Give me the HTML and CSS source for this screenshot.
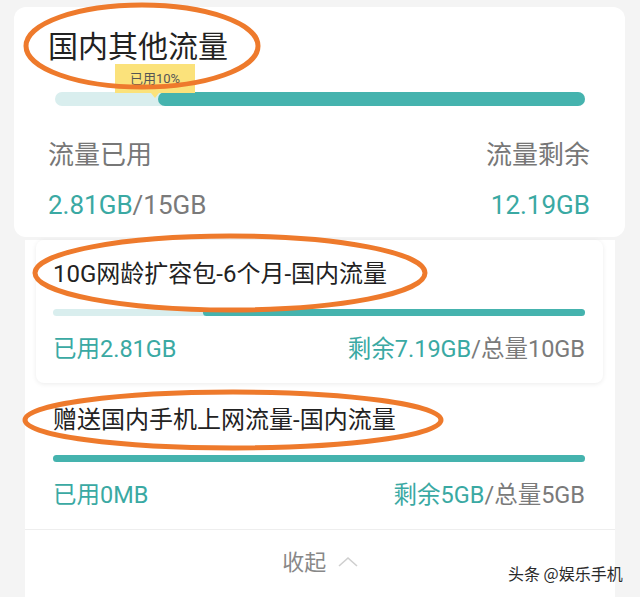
FILE: index.html
```html
<!DOCTYPE html>
<html lang="zh-CN">
<head>
  <meta charset="UTF-8">
  <meta name="viewport" content="width=device-width, initial-scale=1.0">
  <title>国内其他流量</title>
  <link rel="stylesheet" href="styles.css">
</head>
<body>
  <div class="screen">
    <section class="summary">
      <h1 class="summary-title">国内其他流量</h1>
      <div class="usage">
        <div class="tip">已用10%</div>
        <div class="usage-fill"></div>
      </div>
      <div class="stats">
        <div class="stat">
          <span class="stat-label">流量已用</span>
          <span class="stat-value">2.81GB<em>/15GB</em></span>
        </div>
        <div class="stat stat-right">
          <span class="stat-label">流量剩余</span>
          <span class="stat-value">12.19GB</span>
        </div>
      </div>
    </section>

    <section class="packages">
      <div class="pkg pkg-raised">
        <h2 class="pkg-title">10G网龄扩容包-6个月-国内流量</h2>
        <div class="pkg-bar"><div class="pkg-fill" style="width:71.9%"></div></div>
        <div class="pkg-stats">
          <span>已用2.81GB</span>
          <span>剩余7.19GB<em>/总量10GB</em></span>
        </div>
      </div>
      <div class="pkg pkg-plain">
        <h2 class="pkg-title">赠送国内手机上网流量-国内流量</h2>
        <div class="pkg-bar"><div class="pkg-fill" style="width:100%"></div></div>
        <div class="pkg-stats">
          <span>已用0MB</span>
          <span>剩余5GB<em>/总量5GB</em></span>
        </div>
      </div>
      <div class="collapse">
        收起
        <svg class="chevron" width="20" height="11" viewBox="0 0 20 11">
          <path d="M1 10 L10 2 L19 10" fill="none" stroke="#cfcfcf" stroke-width="1.6"/>
        </svg>
      </div>
    </section>

    <!-- 手画的标注圈 -->
    <svg class="marks" width="640" height="597" viewBox="0 0 640 597">
      <ellipse cx="142" cy="46" rx="116" ry="41" fill="none" stroke="#ee7a2c" stroke-width="5"/>
      <ellipse cx="230" cy="273" rx="195" ry="37" fill="none" stroke="#ee7a2c" stroke-width="5"/>
      <ellipse cx="233" cy="420" rx="208" ry="28" fill="none" stroke="#ee7a2c" stroke-width="5"/>
    </svg>

    <div class="watermark">头条 @娱乐手机</div>
  </div>
</body>
</html>
```

FILE: styles.css
```css
body {
  margin: 0;
  background: #f4f4f4;
  font-family: Roboto, "Noto Sans CJK SC", sans-serif;
}
.screen {
  position: relative;
  width: 640px;
  height: 597px;
  padding-top: 7px;
  box-sizing: border-box;
  overflow: hidden;
}

/* 顶部汇总卡片 */
.summary {
  margin: 0 15px 0 14px;
  height: 230px;
  padding-top: 20px;
  box-sizing: border-box;
  background: #fff;
  border-radius: 12px;
}
.summary-title {
  margin: 0 0 0 34px;
  font-size: 30px;
  line-height: 40px;
  font-weight: 400;
  color: #222;
}
.usage {
  position: relative;
  display: flex;
  justify-content: flex-end;
  margin: 25px 40px 0 41px;
  height: 14px;
  background: #d9eeee;
  border-radius: 7px;
}
.usage-fill {
  width: 80.6%;
  background: #45b3ae;
  border-radius: 7px;
}
.tip {
  position: absolute;
  left: 60px;
  bottom: 13px;
  width: 80px;
  height: 29px;
  background: #fbe27b;
  font-size: 13px;
  line-height: 29px;
  text-align: center;
  color: #555;
}
.tip::after {
  content: "";
  position: absolute;
  left: 36px;
  top: 29px;
  border-left: 4px solid transparent;
  border-right: 4px solid transparent;
  border-top: 5px solid #fbe27b;
}
.stats {
  display: flex;
  justify-content: space-between;
  margin: 33px 35px 0 34px;
}
.stat {
  display: flex;
  flex-direction: column;
  gap: 18px;
}
.stat-right {
  align-items: flex-end;
}
.stat-label {
  font-size: 26px;
  line-height: 32px;
  color: #777;
}
.stat-value {
  font-size: 26px;
  line-height: 32px;
  color: #3aa9a3;
}
.stat-value em,
.pkg-stats em {
  font-style: normal;
  color: #7a7a7a;
}

/* 流量包列表 */
.packages {
  margin: 3px 25px 0;
  height: 357px;
  background: #fff;
}
.pkg {
  margin: 0 12px 0 11px;
  padding: 19px 18px 19px 17px;
}
.pkg-raised {
  border-radius: 8px;
  box-shadow: 0 1px 5px rgba(0, 0, 0, 0.08);
}
.pkg-plain {
  margin-top: 3px;
}
.pkg-title {
  margin: 0;
  font-size: 24px;
  line-height: 30px;
  font-weight: 400;
  color: #222;
}
.pkg-bar {
  display: flex;
  justify-content: flex-end;
  margin-top: 20px;
  height: 7px;
  background: #d9eeee;
  border-radius: 4px;
}
.pkg-fill {
  background: #45b3ae;
  border-radius: 4px;
}
.pkg-stats {
  display: flex;
  justify-content: space-between;
  margin-top: 18px;
  font-size: 23.5px;
  line-height: 30px;
  color: #3aa9a3;
}
.collapse {
  border-top: 1px solid #eee;
  padding-top: 18px;
  text-align: center;
  font-size: 22px;
  line-height: 30px;
  color: #888;
}
.chevron {
  margin-left: 6px;
  vertical-align: 3px;
}

.marks {
  position: absolute;
  top: 0;
  left: 0;
  pointer-events: none;
}
.watermark {
  position: absolute;
  left: 508px;
  top: 563px;
  font-family: "Noto Sans CJK SC", sans-serif;
  font-size: 16px;
  line-height: 20px;
  color: #2a2a2a;
  text-shadow: 0 0 2px #fff, 0 0 2px #fff;
}
```
